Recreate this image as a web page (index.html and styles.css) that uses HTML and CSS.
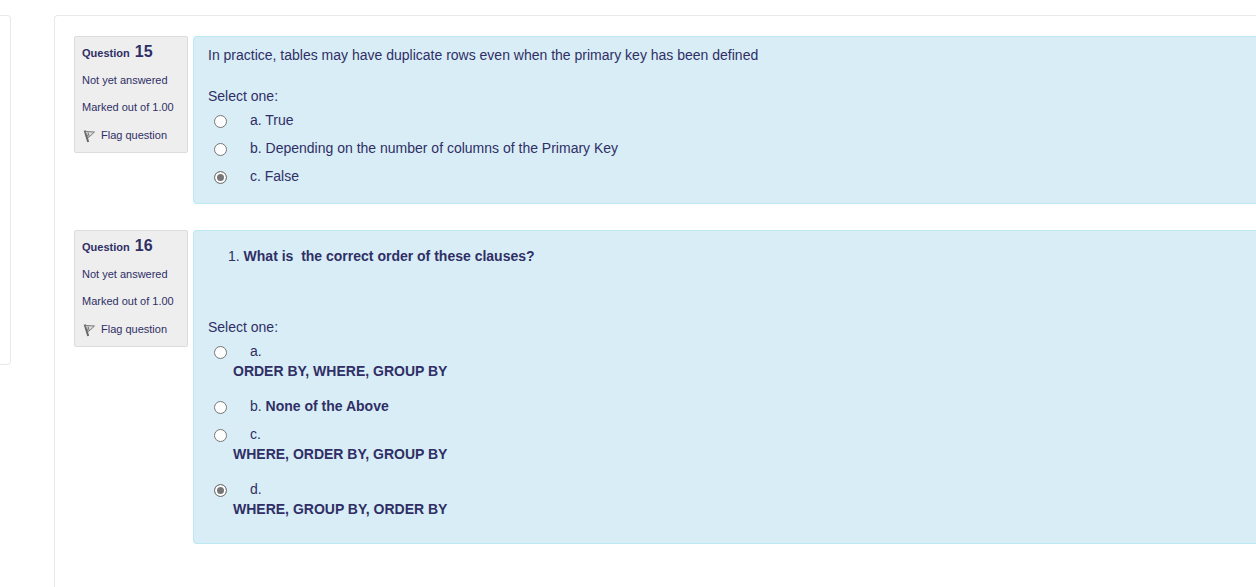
FILE: index.html
```html
<!DOCTYPE html>
<html lang="en">
<head>
<meta charset="utf-8">
<title>Quiz</title>
<link rel="stylesheet" href="styles.css">
</head>
<body>
<div class="page">
  <aside class="side-panel"></aside>
  <main class="quiz">
    <section class="question">
      <div class="info">
        <h3 class="info-title">Question <span class="number">15</span></h3>
        <div>Not yet answered</div>
        <div>Marked out of 1.00</div>
        <button class="flag" type="button">
          <svg class="flag-icon" viewBox="0 0 13 13" aria-hidden="true"><path d="M1.7 .5L5.2 12" stroke="#666" stroke-width="2"/><path d="M2 1.5L11.5 2L5.5 7.5Z" fill="#ddd" stroke="#777"/><path d="M5 2.5L6 6" stroke="#777"/></svg>
          Flag question
        </button>
      </div>
      <div class="content">
        <p class="text">In practice, tables may have duplicate rows even when the primary key has been defined</p>
        <fieldset class="answers">
          <legend class="prompt">Select one:</legend>
          <div class="option"><input class="radio" type="radio" name="q15" id="q15a"><label class="answer" for="q15a"><span class="letter">a. True</span></label></div>
          <div class="option"><input class="radio" type="radio" name="q15" id="q15b"><label class="answer" for="q15b"><span class="letter">b. Depending on the number of columns of the Primary Key</span></label></div>
          <div class="option"><input class="radio" type="radio" name="q15" id="q15c" checked><label class="answer" for="q15c"><span class="letter">c. False</span></label></div>
        </fieldset>
      </div>
    </section>
    <section class="question">
      <div class="info">
        <h3 class="info-title">Question <span class="number">16</span></h3>
        <div>Not yet answered</div>
        <div>Marked out of 1.00</div>
        <button class="flag" type="button">
          <svg class="flag-icon" viewBox="0 0 13 13" aria-hidden="true"><path d="M1.7 .5L5.2 12" stroke="#666" stroke-width="2"/><path d="M2 1.5L11.5 2L5.5 7.5Z" fill="#ddd" stroke="#777"/><path d="M5 2.5L6 6" stroke="#777"/></svg>
          Flag question
        </button>
      </div>
      <div class="content">
        <div class="text numbered">1. <b>What is&nbsp; the correct order of these clauses?</b></div>
        <fieldset class="answers">
          <legend class="prompt">Select one:</legend>
          <div class="option"><input class="radio" type="radio" name="q16" id="q16a"><label class="answer" for="q16a"><span class="letter">a.</span><b class="clauses">ORDER BY, WHERE, GROUP BY</b></label></div>
          <div class="option"><input class="radio" type="radio" name="q16" id="q16b"><label class="answer" for="q16b"><span class="letter">b. <b>None of the Above</b></span></label></div>
          <div class="option"><input class="radio" type="radio" name="q16" id="q16c"><label class="answer" for="q16c"><span class="letter">c.</span><b class="clauses">WHERE, ORDER BY, GROUP BY</b></label></div>
          <div class="option"><input class="radio" type="radio" name="q16" id="q16d" checked><label class="answer" for="q16d"><span class="letter">d.</span><b class="clauses">WHERE, GROUP BY, ORDER BY</b></label></div>
        </fieldset>
      </div>
    </section>
  </main>
</div>
</body>
</html>
```
FILE: styles.css
```css
* { box-sizing: border-box; }
body {
  margin: 0;
  background: #fff;
  color: #2f2f66;
  font: 14px/20px "Liberation Sans", Arial, sans-serif;
}
.page {
  display: flex;
  gap: 43px;
  min-height: 100vh;
  padding-top: 15px;
}
.side-panel {
  flex: 0 0 11px;
  height: 350px;
  border: 1px solid #e8e8e8;
  border-left: 0;
  border-radius: 0 4px 4px 0;
}
.quiz {
  flex: 1;
  display: flex;
  flex-direction: column;
  gap: 26px;
  padding: 20px 0 20px 19px;
  border: 1px solid #e8e8e8;
  border-width: 1px 0 0 1px;
  border-radius: 4px 0 0 0;
}
.question {
  display: flex;
  align-items: flex-start;
  gap: 5px;
}
.info {
  flex: 0 0 114px;
  display: flex;
  flex-direction: column;
  gap: 7px;
  padding: 5px 0 7px 7px;
  border: 1px solid #dcdcdc;
  border-radius: 2px;
  background: #eee;
  font-size: 11px;
}
.info-title {
  margin: 0;
  font-size: 11px;
  line-height: 19px;
}
.number {
  margin-left: 2px;
  font-size: 16px;
}
.flag {
  display: flex;
  align-items: center;
  gap: 5px;
  padding: 1px 0 0 1px;
  border: 0;
  background: none;
  color: inherit;
  font: inherit;
  cursor: pointer;
}
.flag-icon {
  width: 13px;
  height: 13px;
  margin-top: 3px;
  fill: none;
}
.content {
  flex: 1;
  padding: 8px 14px 13px;
  border: 1px solid #bce8f1;
  border-right: 0;
  border-radius: 4px 0 0 4px;
  background: #d9edf6;
}
.text { margin: 0 0 21px; }
.numbered {
  margin: 0;
  padding: 7px 0 51px 20px;
}
.answers {
  margin: 0;
  padding: 0;
  border: 0;
}
.prompt { padding: 0; }
.option {
  display: flex;
  align-items: flex-start;
  padding: 4px 0;
}
.radio {
  appearance: none;
  flex: none;
  width: 13px;
  height: 13px;
  margin: 5px 6px 0;
  border: 1px solid #767676;
  border-radius: 50%;
  background: #fff;
}
.radio:checked {
  background: #767676;
  box-shadow: inset 0 0 0 2px #fff;
}
.answer { display: block; }
.letter {
  display: block;
  padding-left: 17px;
}
.clauses {
  display: block;
  padding-bottom: 7px;
}
```
